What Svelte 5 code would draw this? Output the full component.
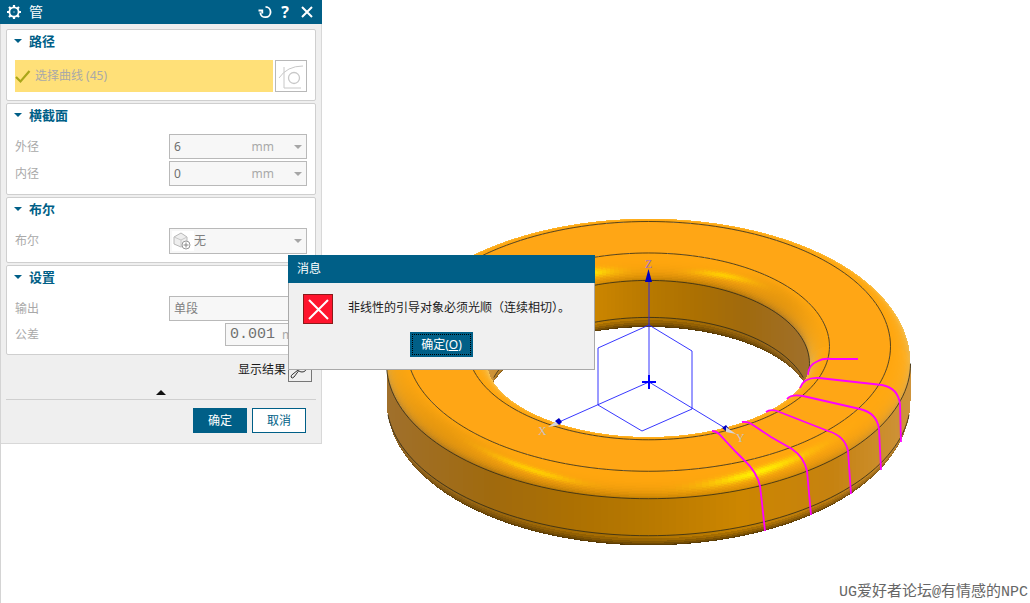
<script lang="ts">
  const CX = 648.5;
  const CY = 363.5;
  const DROP = 37;
  const TILT = 0.516;
  const LIFT = 0.856;
  const OUTER = 242;
  const INNER = 181;
  const TUBE = 20;
  const STRIPS = 240;
  const ARC = 20;

  type Point = [number, number];
  type Face = { points: string; fill: string };

  let outerDiameter = $state('6');
  let innerDiameter = $state('0');
  let tolerance = $state('0.001');

  const fmt = (p: Point) => `${p[0].toFixed(2)},${p[1].toFixed(2)}`;

  // point on the ring surface: side is 1 for the outer wall, -1 for the inner one
  function surface(side: number, a: number, t: number, low: boolean): Point {
    const r = (side > 0 ? OUTER : INNER) + side * TUBE * Math.sin(t);
    const y = CY + (low ? DROP : 0) - TUBE * LIFT * Math.cos(t);
    return [CX + r * Math.cos(a), y + r * TILT * Math.sin(a)];
  }

  function mix(a: number[], b: number[], k: number) {
    const c = Math.max(0, Math.min(1, k));
    return a.map((v, i) => v + (b[i] - v) * c);
  }

  const walls: [number, number[]][] = [
    [-1, [160, 112, 44]],
    [-0.6, [160, 106, 14]],
    [-0.3, [172, 112, 2]],
    [0, [184, 121, 0]],
    [0.35, [204, 134, 0]],
    [0.7, [198, 130, 16]],
    [1, [206, 148, 60]]
  ];

  function wallColor(nx: number) {
    for (let i = 1; i < walls.length; i++) {
      const [x0, c0] = walls[i - 1];
      const [x1, c1] = walls[i];
      if (nx <= x1) return mix(c0, c1, (nx - x0) / (x1 - x0));
    }
    return walls[walls.length - 1][1];
  }

  function shade(nx: number, ny: number, t: number) {
    let c = wallColor(nx);
    if (t < Math.PI / 2) {
      const k = t / (Math.PI / 2);
      const warm = [255, 166, 14];
      c = mix(warm, c, Math.pow(k, ny > 0 ? 4 : 2.5) * (1 - 0.15 * ny));
      const facing = Math.sin(t) * ny * LIFT + Math.cos(t) * TILT;
      const rim = Math.pow(1 - Math.max(0, facing), 3) * Math.sin(Math.min(t * 1.7, Math.PI));
      c = mix(c, [255, 220, 120], rim * 0.75);
      const dim = Math.exp(-Math.pow((nx + 0.8) / 0.2, 2)) * Math.sin(t * 2) * (ny > 0 ? 0.3 : 0);
      c = mix(c, [190, 125, 10], dim);
      if (ny > 0) {
        const right = Math.exp(-Math.pow((nx - 0.42) / 0.19, 2) - Math.pow((k - 0.54 + (nx - 0.42) * 0.5) / 0.14, 2));
        const left = Math.exp(-Math.pow((nx + 0.45) / 0.16, 2) - Math.pow((k - 0.53 - (nx + 0.45) * 0.5) / 0.1, 2));
        c = mix(c, [255, 242, 0], right * 0.95);
        c = mix(c, [255, 210, 0], left * 0.9);
      }
    } else if (t > Math.PI / 2) {
      c = mix(c, [82, 54, 4], (t - Math.PI / 2) * 1.15);
    }
    return `rgb(${c.map(Math.round).join(',')})`;
  }

  function build(side: number): Face[] {
    const half = Math.PI / 2;
    const strips: { depth: number; faces: Face[] }[] = [];
    for (let i = 0; i < STRIPS; i++) {
      const a0 = (i / STRIPS) * Math.PI * 2;
      const a1 = ((i + 1) / STRIPS) * Math.PI * 2;
      const mid = (a0 + a1) / 2;
      const nx = side * Math.cos(mid);
      const ny = side * Math.sin(mid);
      const faces: Face[] = [];
      // the surface turns away from the viewer past this angle
      const limit = (a: number) => half + Math.atan((LIFT / TILT) * side * Math.sin(a));
      const quad = (p: Point[], t: number) =>
        faces.push({ points: p.map(fmt).join(' '), fill: shade(nx, ny, t) });

      if (ny > 0) {
        for (let j = 0; j < 6; j++) {
          const at = (a: number, n: number) => half + (Math.max(0, limit(a) - half) * n) / 6;
          quad([
            surface(side, a0, at(a0, j), true),
            surface(side, a1, at(a1, j), true),
            surface(side, a1, at(a1, j + 1), true),
            surface(side, a0, at(a0, j + 1), true)
          ], at(mid, j + 0.5));
        }
        quad([
          surface(side, a0, half, false),
          surface(side, a1, half, false),
          surface(side, a1, half, true),
          surface(side, a0, half, true)
        ], half);
      }
      for (let j = 0; j < ARC; j++) {
        const at = (a: number, n: number) => (Math.min(half, limit(a)) * n) / ARC;
        quad([
          surface(side, a0, at(a0, j), false),
          surface(side, a1, at(a1, j), false),
          surface(side, a1, at(a1, j + 1), false),
          surface(side, a0, at(a0, j + 1), false)
        ], at(mid, j + 0.5));
      }
      strips.push({ depth: Math.sin(mid), faces });
    }
    return strips.sort((a, b) => a.depth - b.depth).flatMap((s) => s.faces);
  }

  function curve(side: number, t: number, low: boolean, from: number, to: number) {
    const pts: string[] = [];
    for (let d = from; d <= to; d += 2) pts.push(fmt(surface(side, (d * Math.PI) / 180, t, low)));
    return pts.join(' ');
  }

  const innerFaces = build(-1);
  const outerFaces = build(1);
  const top = `M${curve(1, 0, false, 0, 360)}ZM${curve(-1, 0, false, 0, 360)}Z`;

  const sections = [
    'M712 431Q716 431 719 434L736 452L744 460Q757 472 760 486L762 503L765 531',
    'M742 422Q748 421 753 425L771 437L792 449Q804 457 807 471L811 515',
    'M766 412Q770 409 777 411L828 431Q845 436 848 451L851 494',
    'M787 399Q791 394 803 396L860 409Q877 413 879 429L881 470',
    'M800 388Q804 377 819 378L882 385Q898 388 900 404L901 442',
    'M808 375Q808 365 818 361Q823 358 832 359H858'
  ];
</script>

{#snippet heading(text: string)}
  <h2><button type="button"><i class="caret"></i>{text}</button></h2>
{/snippet}

{#snippet measure(id: string, label: string)}
  <div class="row">
    <label for={id}>{label}</label>
    <div class="field">
      {#if id === 'outer'}
        <input {id} bind:value={outerDiameter} />
      {:else}
        <input {id} bind:value={innerDiameter} />
      {/if}
      <span class="unit">mm</span>
      <button type="button" class="drop" aria-label="{label} mm"><i class="arrow"></i></button>
    </div>
  </div>
{/snippet}

<main class="workspace">
  <div class="side">
    <section class="panel">
      <header>
        <svg width="16" height="16" viewBox="0 0 16 16" fill="none" stroke="#fff">
          <circle cx="8" cy="8" r="4.6" stroke-width="1.8" />
          <path d="M8 1v2.5M8 12.5V15M1 8h2.5M12.5 8H15M3 3l1.8 1.8M11.2 11.2 13 13M3 13l1.8-1.8M11.2 4.8 13 3" stroke-width="2.2" />
          <path d="M7.5 8h1" />
        </svg>
        <h1>管</h1>
        <button type="button" aria-label="重置">
          <svg width="14" height="14" viewBox="0 0 14 14" fill="none" stroke="#fff" stroke-width="1.8">
            <path d="M7.500 1.800A5.200 5.200 0 1 1 2.200 7.500M.5 5.500h3.800v3" />
          </svg>
        </button>
        <button type="button" class="help" aria-label="帮助">?</button>
        <button type="button" aria-label="关闭">
          <svg width="14" height="14" viewBox="0 0 14 14" stroke="#fff" stroke-width="2">
            <path d="M2 2l10 10M12 2 2 12" />
          </svg>
        </button>
      </header>

      <div class="groups">
        <div class="group">
          {@render heading('路径')}
          <div class="pick-row">
            <button type="button" class="pick">
              <svg width="16" height="16" viewBox="0 0 16 16" fill="none" stroke="#aaa619" stroke-width="2.2">
                <path d="M1 9l4.5 4.5L14.500 3" />
              </svg>
              选择曲线 (45)
            </button>
            <button type="button" class="tool" aria-label="曲线">
              <svg width="30" height="30" viewBox="0 0 30 30" fill="none" stroke="#c8c8c8">
                <path d="M3 17Q11 5 27 5M8 6v21h17" />
                <circle cx="18" cy="17" r="5.500" stroke-width="1.300" />
              </svg>
            </button>
          </div>
        </div>

        <div class="group">
          {@render heading('横截面')}
          {@render measure('outer', '外径')}
          {@render measure('inner', '内径')}
        </div>

        <div class="group">
          {@render heading('布尔')}
          <div class="row">
            <label for="bool">布尔</label>
            <div class="field tall">
              <svg class="solid" width="22" height="20" viewBox="0 0 22 20">
                <path d="M2 6l7-4 6 4v7l-6 3-7-3z" fill="#eee" stroke="#b8b8b8" />
                <path d="M2 6l7 3 6-3M9 9v7" fill="none" stroke="#c8c8c8" />
                <circle cx="14" cy="14" r="4" fill="#fff" stroke="#999" />
                <path d="M14 11.500v5M11.500 14h5" stroke="#888" />
              </svg>
              <select id="bool"><option>无</option></select>
              <i class="arrow"></i>
            </div>
          </div>
        </div>

        <div class="group">
          {@render heading('设置')}
          <div class="row">
            <label for="output">输出</label>
            <div class="field">
              <select id="output"><option>单段</option></select>
              <i class="arrow"></i>
            </div>
          </div>
          <div class="row">
            <label for="tolerance">公差</label>
            <div class="field short">
              <input id="tolerance" class="mono" bind:value={tolerance} />
              <span class="unit">mm</span>
            </div>
          </div>
        </div>
      </div>

      <div class="preview">
        <span>显示结果</span>
        <button type="button" aria-label="显示结果">
          <svg width="22" height="22" viewBox="0 0 22 22" fill="none" stroke="#333">
            <circle cx="13" cy="8" r="5" />
            <path d="M9.500 12 5 18q-2 2-3 0 0-2 2-3l5-4" />
          </svg>
        </button>
      </div>
      <button type="button" class="collapse" aria-label="收起"><i></i></button>
      <footer>
        <button type="button" class="primary">确定</button>
        <button type="button" class="plain">取消</button>
      </footer>
    </section>
  </div>

  <svg class="scene" viewBox="322 0 708 603" preserveAspectRatio="xMinYMin meet">
    <g shape-rendering="crispEdges">
      {#each [...innerFaces, ...outerFaces] as face}
        <polygon points={face.points} fill={face.fill} />
      {/each}
    </g>
    <path d={top} fill="#ffa615" fill-rule="evenodd" />

    <g class="edges">
      <polyline points={curve(1, 0, false, 0, 360)} />
      <polyline points={curve(-1, 0, false, 0, 360)} />
      <polyline points={curve(1, Math.PI / 2, false, 0, 180)} />
      <polyline points={curve(1, Math.PI / 2, true, 6, 174)} />
      <polyline points={curve(-1, Math.PI / 2, false, 182, 366)} />
      <polyline points={curve(-1, Math.PI / 2, true, 196, 344)} />
    </g>

    <g class="sections">
      {#each sections as d}
        <path {d} />
      {/each}
    </g>

    <g class="datum">
      <path d="M649 382V280M649 325l-51 23v57l44 26 50-22v-58zM649 382l-90 40M649 382l76 46" />
      <path class="origin" d="M642 382h14M649 375v14" />
      <path class="head" d="M648.500 269l3.500 13h-7zM555 421l4-3 3 4-3 3zM722 428l4-3 3 4-3 2z" />
      <path class="tip" d="M548 427l7-5 4 3zM726 427l10 7-10-2z" />
      <text class="z" x="645" y="268">Z</text>
      <text x="538" y="435">X</text>
      <text x="736" y="442">Y</text>
    </g>
  </svg>

  <div class="dialog" role="alertdialog" aria-labelledby="dialog-title">
    <h2 id="dialog-title">消息</h2>
    <div class="message">
      <svg width="30" height="30" viewBox="0 0 30 30">
        <rect x="0.500" y="0.500" width="29" height="29" fill="#ff142d" stroke="#8c1a1a" />
        <path d="M6 6l19 19M25 6 6 25" stroke="#fff" stroke-width="2" />
      </svg>
      <p>非线性的引导对象必须光顺（连续相切）。</p>
    </div>
    <button type="button" class="confirm"><span>确定(<u>O</u>)</span></button>
  </div>

  <p class="credit">UG爱好者论坛@有情感的NPC</p>
</main>

<style>
  :global(body) {
    margin: 0;
    background: #fff;
  }

  .workspace {
    position: relative;
    display: flex;
    min-height: 100vh;
    overflow: hidden;
    font: 12px/16px "Noto Sans", "Noto Sans CJK SC", sans-serif;
    color: #1a1a1a;
  }

  button, input, select {
    margin: 0;
    padding: 0;
    border: 0;
    border-radius: 0;
    background: none;
    font: inherit;
    color: inherit;
  }

  h1, h2, p { margin: 0; }
  svg { display: block; }

  .side {
    box-sizing: border-box;
    flex: 0 0 322px;
    border-left: 1px solid #d4d4d4;
  }

  .panel {
    box-sizing: border-box;
    background: #efefef;
    border-right: 1px solid #d8d8d8;
    border-bottom: 1px solid #d8d8d8;
  }

  header {
    display: flex;
    align-items: center;
    gap: 6px;
    height: 24px;
    margin: 0 -1px;
    padding: 0 8px 0 6px;
    background: #005f87;
    color: #fff;
  }

  h1 {
    flex: 1;
    padding-left: 1px;
    font-size: 14px;
    font-weight: 400;
  }

  header .help {
    width: 14px;
    font: bold 16px/20px "Noto Sans", sans-serif;
  }

  header button:last-child { margin-left: 2px; }

  .groups {
    display: flex;
    flex-direction: column;
    gap: 2px;
    padding: 5px 5px 0;
  }

  .group {
    display: flex;
    flex-direction: column;
    gap: 2px;
    padding: 0 8px;
    padding-bottom: 8px;
    border: 1px solid #cfcfcf;
    border-radius: 2px;
    background: #fff;
  }

  .group h2 {
    height: 24px;
    margin-bottom: 4px;
    font-size: 13px;
    line-height: 22px;
    color: #005f87;
  }

  .group h2 button {
    display: flex;
    align-items: center;
    gap: 7px;
  }

  .caret {
    border: 4px solid transparent;
    border-top-color: #005f87;
    border-bottom: 0;
    margin-left: -1px;
  }

  .pick-row {
    display: flex;
    gap: 2px;
  }

  .pick {
    flex: 1;
    display: flex;
    align-items: center;
    gap: 4px;
    height: 32px;
    background: #ffe078;
    color: #a9a9a9;
  }

  .tool {
    border: 1px solid #b8b8b8;
  }

  .row {
    display: flex;
    align-items: center;
    justify-content: space-between;
    color: #a9a9a9;
  }

  .field {
    position: relative;
    box-sizing: border-box;
    display: flex;
    align-items: center;
    width: 138px;
    height: 25px;
    padding: 0 4px;
    border: 1px solid #b9b9b9;
    background: #f7f7f7;
  }

  .field.tall {
    height: 26px;
    padding-left: 2px;
  }

  .field.short {
    width: 82px;
    height: 23px;
  }

  .field input {
    flex: 1;
    min-width: 0;
    color: #707070;
  }

  .field .mono {
    flex: 0 0 52px;
    font: 15px/20px "Liberation Mono", monospace;
  }

  .field select {
    flex: 1;
    appearance: none;
    color: #808080;
  }

  .solid { background: #fff; }
  .drop { margin-left: 20px; }

  .arrow {
    display: block;
    border: 4px solid transparent;
    border-top-color: #a6a6a6;
    border-bottom: 0;
  }

  .preview {
    display: flex;
    align-items: center;
    justify-content: flex-end;
    gap: 2px;
    padding: 3px 9px 0 0;
  }

  .preview button {
    border: 1px solid #777;
  }

  .collapse {
    display: block;
    width: 100%;
    height: 17px;
  }

  .collapse i {
    display: block;
    width: 0;
    margin: 3px auto 0;
    border: 5px solid transparent;
    border-bottom-color: #111;
    border-top: 0;
  }

  footer {
    display: flex;
    justify-content: flex-end;
    gap: 5px;
    margin: 0 5px;
    padding: 8px 10px 10px 0;
    border-top: 1px solid #cfcfcf;
  }

  footer button {
    box-sizing: border-box;
    width: 54px;
    height: 25px;
    border: 1px solid #005f87;
  }

  .primary {
    background: #005f87;
    color: #fff;
  }

  .plain {
    background: #fff;
    color: #005f87;
  }

  .scene {
    flex: 1;
    min-width: 0;
    align-self: flex-start;
  }

  .edges {
    fill: none;
    stroke: #2c2818;
    stroke-width: 0.8;
  }

  .sections {
    fill: none;
    stroke: #f0f;
    stroke-width: 1.8;
  }

  .datum path {
    fill: none;
    stroke: #2020ff;
    stroke-width: 0.9;
  }

  .datum .origin {
    stroke: #00f;
    stroke-width: 2;
  }

  .datum .head {
    fill: #0000c0;
    stroke: none;
  }

  .datum .tip {
    fill: #d4d4dc;
    stroke: none;
  }

  .datum text {
    font: 12px "Liberation Serif", serif;
    fill: #c9c2c2;
  }

  .datum .z { fill: #a070c8; }

  .dialog {
    position: absolute;
    top: 255px;
    left: 288px;
    box-sizing: border-box;
    display: flex;
    flex-direction: column;
    width: 307px;
    padding-bottom: 12px;
    border: 1px solid #a9a9a9;
    border-top: 0;
    background: #f0f0f0;
  }

  .dialog h2 {
    margin: 0 -1px;
    padding-left: 9px;
    font-size: 12px;
    font-weight: 400;
    line-height: 28px;
    background: #005f87;
    color: #fff;
  }

  .message {
    display: flex;
    gap: 15px;
    padding: 11px 0 8px 14px;
  }

  .message p {
    line-height: 28px;
    white-space: nowrap;
  }

  .confirm {
    align-self: center;
    padding: 2px;
    background: #005f87;
    color: #fff;
  }

  .confirm span {
    display: block;
    padding: 0 8px;
    border: 1px dotted #000;
    line-height: 19px;
  }

  .credit {
    position: absolute;
    right: 2px;
    bottom: 0;
    font: 15px/20px "Liberation Mono", "Noto Sans CJK SC", monospace;
    color: #666;
  }
</style>
